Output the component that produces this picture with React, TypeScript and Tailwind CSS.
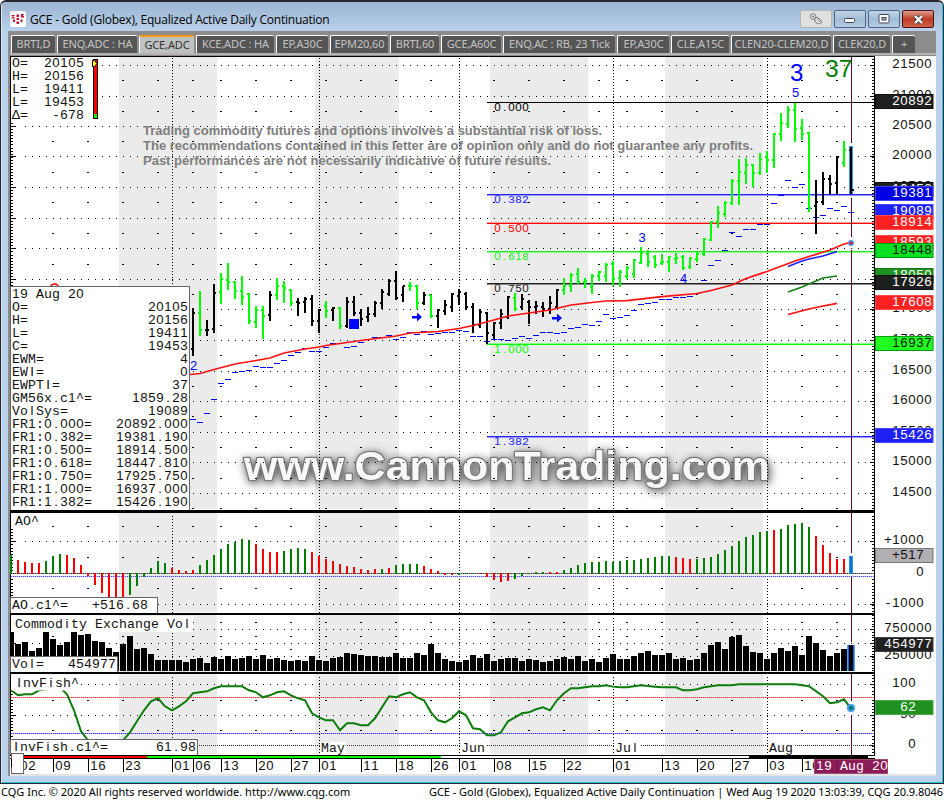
import React from "react";

const SANS = "font-['Liberation_Sans',sans-serif]";
const MONO = "font-['Liberation_Mono',monospace]";

type MonoProps = { x: number; y: number; t: string; fill?: string; pitch?: number; size?: number; end?: boolean };

// Fixed-pitch text: every glyph is centred in its own cell.
function Mono({ x, y, t, fill = "#111", pitch = 8, size = 13.2, end = false }: MonoProps) {
  const x0 = end ? x - t.length * pitch : x;
  return (
    <text y={y} fill={fill} fontSize={size} textAnchor="middle" xmlSpace="preserve">
      {t.split("").map((c, i) => (
        <tspan key={i} x={x0 + pitch * (i + 0.5)} className={/[01iIl.Δ]/.test(c) ? SANS : MONO}>
          {c}
        </tspan>
      ))}
    </text>
  );
}

// x, high, low, open, close, colour
type Bar = [number, number, number, number, number, string];
const bars: Bar[] = [
  [193,308,356,349,313,"k"],[200,291,336,313,330,"g"],[207,320,336,330,330,"k"],[214,284,333,329,293,"k"],
  [221,273,304,292,279,"g"],[228,263,290,280,282,"g"],[235,281,299,282,291,"g"],[242,276,305,291,297,"g"],
  [249,293,324,294,321,"g"],[256,306,328,322,310,"g"],[263,306,339,310,316,"g"],[270,291,321,315,295,"k"],
  [277,278,300,295,286,"g"],[284,281,303,286,288,"g"],[291,289,306,290,303,"g"],[298,298,316,302,303,"k"],
  [305,297,313,302,299,"k"],[312,295,326,299,321,"k"],[319,309,333,321,310,"k"],[326,301,318,306,311,"g"],
  [333,307,321,310,308,"k"],[340,307,329,308,326,"g"],[347,297,328,326,302,"k"],[354,296,316,302,313,"k"],
  [361,309,325,313,319,"k"],[368,307,322,317,314,"k"],[375,301,317,314,303,"k"],[382,289,309,303,292,"k"],
  [389,279,296,294,281,"k"],[396,271,300,281,298,"k"],[403,286,302,295,286,"k"],[410,282,291,286,286,"g"],
  [417,285,309,286,303,"g"],[424,292,305,303,295,"k"],[431,295,318,295,316,"g"],[438,309,328,316,310,"k"],
  [445,300,315,311,305,"k"],[452,293,312,307,294,"k"],[459,289,305,296,292,"k"],[466,292,310,294,307,"k"],
  [473,303,333,307,325,"k"],[480,309,328,325,312,"k"],[487,312,344,313,333,"k"],[494,322,339,335,323,"k"],
  [501,309,329,323,314,"k"],[508,296,319,317,297,"k"],[515,293,311,298,309,"g"],[522,294,310,307,299,"k"],
  [529,300,324,302,307,"k"],[536,301,314,307,306,"k"],[543,302,317,307,309,"k"],[550,296,314,309,303,"k"],
  [557,289,309,307,290,"k"],[564,278,295,290,286,"g"],[571,273,292,286,275,"g"],[578,268,284,274,282,"g"],
  [585,278,288,282,281,"g"],[592,274,294,287,276,"g"],[599,271,281,276,272,"g"],[606,263,282,276,265,"g"],
  [613,261,286,264,279,"g"],[620,270,287,278,272,"g"],[627,266,279,276,268,"g"],[634,259,278,274,260,"g"],
  [641,247,264,263,253,"g"],[648,250,267,254,262,"g"],[655,255,268,257,265,"g"],[662,254,265,263,262,"g"],
  [669,256,272,262,257,"g"],[676,253,264,259,258,"g"],[683,255,270,257,268,"g"],[690,257,269,267,258,"g"],
  [697,251,262,259,254,"g"],[704,238,256,254,239,"g"],[711,221,241,240,222,"g"],[718,206,228,222,213,"g"],
  [725,201,217,214,203,"g"],[732,179,205,203,181,"g"],[739,159,205,181,172,"g"],[746,158,184,173,165,"g"],
  [753,164,187,165,173,"g"],[760,153,175,173,159,"g"],[767,151,173,157,160,"g"],[774,133,168,160,134,"g"],
  [781,113,141,134,123,"g"],[788,106,128,124,110,"g"],[795,103,142,110,129,"g"],[802,119,140,128,134,"g"],
  [809,132,212,133,208,"g"],[816,180,234,206,202,"k"],[823,172,205,202,179,"k"],[830,175,194,179,184,"k"],
  [837,156,194,183,157,"k"],[844,141,167,163,150,"g"],
];

// Volatility stops, one per session starting at x = 193
const stops = [
  419,422,413,399,383,379,372,371,370,366,367,367,363,360,355,352,348,351,351,347,343,343,347,346,342,339,337,337,
  335,339,337,332,334,331,334,333,332,332,330,331,336,336,341,339,339,340,338,336,338,335,332,332,333,332,328,327,
  324,325,321,314,318,317,315,310,304,303,302,299,299,297,297,296,293,280,265,260,250,232,236,229,229,224,224,203,
  195,180,187,184,208,217,215,208,210,206,212,
];

// Awesome oscillator: third-pixel offset from the zero line, negative below it; starts at x = 11
const ao = [
  "g57","r41","r35","r32","r32","g38","g53","g59","r56","r47","r26","r-7","r-34","r-57","r-72","r-72","r-72","g-64",
  "g-37","g-10","g17","g38","g32","r17","r11","r8","r11","g26","g41","g56","g74","g89","g95","g104","g101","r89","r74",
  "r65","r65","g68","g74","g77","g74","r65","r53","r44","r38","r29","r23","r20","r14","r11","r14","g14","r17","g26",
  "g29","g29","g29","r23","r14","r8","r-4","r-4","g-4","g2","g2","r2","r-10","r-19","r-25","r-22","g-16","g-7","g2",
  "g5","g5","r5","r5","g11","g17","g26","g32","g35","g35","g38","g35","g38","g41","g41","g44","g47","g50","g53","g53",
  "r50","r47","r44","g44","g47","g50","g59","g71","g83","g98","g110","g116","g125","g128","r131","g134","g146","g149",
  "g152","g140","r113","r86","r62","r44","r44",
];

// Volume bar tops in thirds of a pixel below y = 600; starts at x = 11
const vol = [
  96,132,126,153,144,96,117,135,126,96,105,102,123,126,144,156,132,108,147,144,162,180,180,180,180,186,178,175,189,171,
  178,168,177,175,168,177,165,177,174,180,183,180,183,168,180,183,174,171,159,162,165,168,168,171,171,159,174,174,159,
  165,132,159,178,183,186,180,165,174,162,183,178,174,174,183,178,180,186,183,178,171,178,168,183,178,186,174,162,178,
  178,168,159,153,165,165,159,177,174,180,177,159,135,126,147,111,105,138,156,159,177,159,144,153,138,165,108,129,150,
  168,159,147,135,
];

const fish: [number, number][] = [
  [11,270],[18,285],[25,282],[32,282],[39,270],[60,262],[67,282],[74,330],[81,393],[88,420],[100,445],[112,448],[123,420],[130,396],
  [137,363],[144,330],[151,303],[158,294],[165,318],[172,330],[179,318],[186,303],[193,279],[200,276],[207,273],[214,264],
  [221,258],[242,258],[249,270],[256,276],[263,291],[270,285],[277,276],[284,273],[291,285],[298,294],[305,300],[312,339],
  [319,351],[326,360],[333,360],[340,390],[347,369],[354,369],[361,375],[368,375],[375,354],[382,321],[389,288],[396,291],
  [403,282],[410,276],[417,291],[424,300],[431,336],[438,360],[445,366],[452,354],[459,333],[466,345],[473,384],[480,387],
  [487,405],[494,405],[501,396],[508,363],[515,351],[522,339],[529,336],[536,327],[543,321],[550,330],[557,300],[564,279],
  [571,264],[578,264],[585,261],[592,258],[599,258],[606,255],[613,259],[620,261],[627,261],[641,255],[655,259],[662,261],
  [676,261],[683,270],[690,270],[697,267],[704,261],[718,255],[732,255],[739,252],[795,252],[809,258],[823,288],[830,309],
  [837,306],[844,297],[851,324],
];

const bands = [[119, 98], [315, 84], [490, 98], [665, 98]];
const months = [172, 319, 459, 613, 767];
const dashX = [53,88,123,158,193,221,256,291,326,361,396,431,494,529,564,599,627,662,697,732,802,837];

function Bands({ y, h }: { y: number; h: number }) {
  return <>{bands.map(([x, w]) => <rect key={x} x={x} y={y} width={w} height={h} fill="#ebebeb" />)}</>;
}

function Grid({ y, h, dots, dashes }: { y: number; h: number; dots: number[]; dashes: number[] }) {
  return (
    <g shapeRendering="crispEdges">
      {dots.map((d) => <line key={d} x1={25} x2={869} y1={d + 0.5} y2={d + 0.5} stroke="#000" strokeDasharray="1 6" />)}
      {dashes.map((d) => dashX.map((x) => <rect key={`${d}-${x}`} x={x - 1} y={d} width={2} height={1} />))}
      {months.map((x) => <line key={x} x1={x + 0.5} x2={x + 0.5} y1={y} y2={y + h} stroke="#000" strokeDasharray="1 2" />)}
    </g>
  );
}

function Ticks({ y, h, step, majors, top = 0 }: { y: number; h: number; step: number; majors: number[]; top?: number }) {
  const ys: number[] = [];
  for (let v = majors[0]; v > y; v -= step) ys.push(v);
  for (let v = majors[0] + step; v < y + h; v += step) ys.push(v);
  return (
    <g shapeRendering="crispEdges">
      {ys.map((v) => {
        const r = Math.round(v);
        return (
          <React.Fragment key={v}>
            {r > top && <rect x={11} y={r} width={2} height={1} />}
            <rect x={872} y={r} width={2} height={1} />
          </React.Fragment>
        );
      })}
      {majors.map((m) => (
        <React.Fragment key={m}>
          {m > top && <rect x={11} y={m} width={5} height={1} />}
          <rect x={870} y={m} width={4} height={1} />
        </React.Fragment>
      ))}
      <rect x={874} y={y} width={1} height={h} />
      <rect x={10} y={y} width={1} height={h} />
    </g>
  );
}

function Cross({ segs }: { segs: [number, number][] }) {
  return <>{segs.map(([a, b]) => <rect key={a} x={851} y={a} width={1} height={b - a} fill="#5c0a34" />)}</>;
}

function Pane({ y, h, axis, children }: { y: number; h: number; axis: React.ReactNode; children: React.ReactNode }) {
  return (
    <div className="flex">
      <svg width={865} height={h} viewBox={`10 ${y} 865 ${h}`} className="block shrink-0 bg-white">
        {children}
      </svg>
      <svg width={59} height={h} viewBox={`875 ${y} 59 ${h}`} className="block shrink-0 overflow-visible bg-white">
        {axis}
      </svg>
    </div>
  );
}

function Tag({ y, t, bg, fill = "#fff", stroke, end = 932 }: { y: number; t: string; bg: string; fill?: string; stroke: string; end?: number }) {
  return (
    <g>
      <rect x={875.5} y={y + 0.5} width={57.5} height={14} fill={bg} stroke={stroke} />
      <Mono x={end} y={y + 11} t={t} fill={fill} end />
    </g>
  );
}

const priceMajors = [65, 96, 126, 156, 187, 218, 248, 279, 309, 340, 371, 401, 432, 462, 493];
const priceDashes = [80, 111, 141, 172, 202, 233, 264, 294, 325, 355, 386, 416, 447, 478, 508];
const fibs: [number, string, string, number, string][] = [
  [102, "0.000", "#000", 111, "#000"],
  [194, "0.382", "#2222ff", 203, "#9a9aff"],
  [223, "0.500", "#f00", 232, "#ff9a9a"],
  [251, "0.618", "#22ee22", 260, "#98ff98"],
  [283, "0.750", "#222", 292, "#888"],
  [344, "1.000", "#00ff00", 353, "#88ff88"],
  [436, "1.382", "#2222ff", 445, "#9a9aff"],
];
const popup: [string, string][] = [
  ["19 Aug 20", ""], ["O=", "20105"], ["H=", "20156"], ["L=", "19411"], ["C=", "19453"], ["EWM=", "4"], ["EWI=", "0"],
  ["EWPTI=", "37"], ["GM56x.c1^=", "1859.28"], ["VolSys=", "19089"], ["FR1:0.000=", "20892.000"], ["FR1:0.382=", "19381.190"],
  ["FR1:0.500=", "18914.500"], ["FR1:0.618=", "18447.810"], ["FR1:0.750=", "17925.750"], ["FR1:1.000=", "16937.000"],
  ["FR1:1.382=", "15426.190"],
];
const summary: [string, string][] = [["O=", "20105"], ["H=", "20156"], ["L=", "19411"], ["L=", "19453"], ["Δ=", "-678"]];

function PricePane() {
  return (
    <Pane
      y={57}
      h={453}
      axis={
        <>
          {priceMajors.map((m, i) => <Mono key={m} x={932} y={m + 3} t={String(21500 - i * 500)} end />)}
          <Tag y={94} t="20892" bg="#202020" stroke="#111" />
          <Tag y={182} t="19453" bg="#202020" stroke="#111" />
          <Tag y={186} t="19381" bg="#0000e4" stroke="#4444ff" />
          <Tag y={204} t="19089" bg="#2020ff" stroke="#4646ff" />
          <Tag y={215} t="18914" bg="#ff2020" stroke="#ff4a4a" />
          <Tag y={235} t="18593" bg="#ff2020" stroke="#ff4a4a" />
          <Tag y={243} t="18448" bg="#06e020" fill="#111" stroke="#009a10" />
          <Tag y={268} t="18050" bg="#209020" stroke="#157515" />
          <Tag y={275} t="17926" bg="#1c1f1c" stroke="#111" />
          <Tag y={295} t="17608" bg="#ff2020" stroke="#ff4a4a" />
          <Tag y={336} t="16937" bg="#20ff20" fill="#111" stroke="#009a10" />
          <Tag y={428} t="15426" bg="#2020ff" stroke="#4646ff" />
        </>
      }
    >
      <defs>
        <filter id="glow" x="-10%" y="-60%" width="120%" height="220%">
          <feDropShadow dx="1" dy="2" stdDeviation="5" floodColor="#000" floodOpacity="0.7" />
        </filter>
      </defs>
      <Bands y={57} h={452} />
      <text
        x={244}
        y={479.5}
        textLength={526}
        lengthAdjust="spacingAndGlyphs"
        className={SANS}
        fontWeight="bold"
        fontSize={41}
        fill="#f8f8f8"
        stroke="#777"
        strokeWidth={2.6}
        strokeLinejoin="round"
        paintOrder="stroke"
        filter="url(#glow)"
      >
        www.CannonTrading.com
      </text>
      <Grid y={58} h={452} dots={priceMajors} dashes={priceDashes} />
      <Ticks y={57} h={453} step={3.057} majors={priceMajors} top={121} />
      <g className={SANS} fontWeight="bold" fontSize={13} fill="#7e7e7e">
        <text x={143} y={135} textLength={459}>Trading commodity futures and options involves a substantial risk of loss.</text>
        <text x={143} y={150} textLength={610}>The recommendations contained in this letter are of opinion only and do not guarantee any profits.</text>
        <text x={143} y={165} textLength={408}>Past performances are not necessarily indicative of future results.</text>
      </g>
      {fibs.map(([y, t, c, by, soft]) => (
        <g key={t}>
          {t !== "0.000" && <rect x={487} y={t === "0.500" || t === "1.000" ? y - 1 : y + 1} width={387} height={1} fill={soft} />}
          <rect x={487} y={y} width={387} height={1} fill={c} />
          <Mono x={494} y={by} t={t} fill={c} pitch={7} size={11.6} />
        </g>
      ))}
      <g shapeRendering="crispEdges" fill="#00f">
        {stops.map((y, i) => <rect key={i} x={190 + i * 7} y={y} width={6} height={1} />)}
      </g>
      <g shapeRendering="crispEdges">
        {bars.map(([x, hi, lo, o, c, k]) => (
          <g key={x} fill={k === "g" ? "#00ff00" : "#000"}>
            <rect x={x - 1} y={hi} width={2} height={lo - hi} />
            <rect x={x - 2} y={o - 1} width={2} height={2} />
            <rect x={x} y={c - 1} width={2} height={2} />
          </g>
        ))}
        <rect x={849} y={146} width={4} height={48} fill="#3399ff" />
        <rect x={850} y={147} width={2} height={47} />
        <rect x={849} y={149} width={2} height={2} />
        <rect x={851} y={189} width={3} height={2} />
        <rect x={349} y={319} width={10} height={10} fill="#00f" />
      </g>
      <g fill="#00f">
        <path d="M412 316h5v-3.5l5 4.5-5 4.5V318.5h-5z" />
        <path d="M552 317h5v-3.5l5 4.5-5 4.5V319.5h-5z" />
      </g>
      <g fill="none" strokeWidth={1.7}>
        <polyline stroke="#ff1010" points="190,374.5 200,373.5 214,369.5 235,364 256,360.5 270,358 284,353 305,349 319,347 326,345.5 361,340.5 396,336 410,333 438,331.5 459,328.5 473,325.5 494,320 508,316 529,313 550,310 571,305 592,302.5 606,301 627,300.7 662,296.7 697,293.5 711,290.5 732,285 746,278.5 767,271.5 795,261 809,256.5 830,250 844,244 851,242.5" />
        <polyline stroke="#2020ff" points="788,266.5 802,261 809,259 823,256 837,251.5" />
        <polyline stroke="#158015" points="788,292 802,287 816,281 823,278 830,277 837,276" />
        <polyline stroke="#ff1010" points="788,314.5 809,309 823,306 837,303.3" />
        <circle cx={54.5} cy={288} r={4} stroke="#f00" />
      </g>
      <circle cx={851} cy={243} r={3} fill="#4a90e0" />
      <circle cx={851} cy={243} r={1.5} fill="#e01838" />
      <Cross segs={[[57, 143], [198, 237], [250, 510]]} />
      <g className={SANS} fontSize={13} fill="#00f">
        <text x={790} y={81} fontSize={24}>3</text>
        <text x={825} y={77} fontSize={24.5} fill="#008000">37</text>
        <text x={792} y={97}>5</text>
        <text x={638.5} y={242}>3</text>
        <text x={680} y={283}>4</text>
        <text x={190} y={370}>2</text>
      </g>

      <rect x={11} y={57} width={89} height={64} fill="#fff" />
      {summary.map(([a, b], i) => (
        <React.Fragment key={i}>
          <Mono x={12} y={67 + i * 13} t={a} />
          <Mono x={84} y={67 + i * 13} t={b} end />
        </React.Fragment>
      ))}
      <rect x={93.5} y={59.5} width={4} height={59} fill="#f00" stroke="#000" />
      <rect x={94} y={114} width={3} height={4} fill="#0e0" />
      <path d="M92.5 60.5h2l2.5 3-2.5 3h-2z" fill="#ff0" stroke="#000" />

      <rect x={10.5} y={286.5} width={179} height={224} fill="#fff" stroke="#666" />
      {popup.map(([a, b], i) => (
        <React.Fragment key={i}>
          <Mono x={12} y={298 + i * 13} t={a} />
          {b && <Mono x={188} y={298 + i * 13} t={b} end />}
        </React.Fragment>
      ))}
    </Pane>
  );
}

function OscPane() {
  return (
    <Pane
      y={513}
      h={100}
      axis={
        <>
          <Mono x={924} y={544} t="+1000" end />
          <Mono x={924} y={576} t="0" end />
          <Mono x={924} y={607} t="-1000" end />
          <Tag y={548} t="+517" bg="#b2afb2" fill="#111" stroke="#777" end={924} />
        </>
      }
    >
      <Bands y={513} h={99} />
      <Grid y={516} h={97} dots={[541, 604]} dashes={[526, 557, 588]} />
      <Ticks y={513} h={100} step={3.17} majors={[573, 541, 604]} top={527} />
      <g shapeRendering="crispEdges">
        <line x1={11} x2={874} y1={573.5} y2={573.5} stroke="#999" />
        <line x1={11} x2={874} y1={573.5} y2={573.5} stroke="#333" strokeDasharray="1 1" />
        <line x1={11} x2={874} y1={576.5} y2={576.5} stroke="#4a4aff" strokeDasharray="1 1" />
        <line x1={11} x2={874} y1={576.5} y2={576.5} stroke="#c0c0ff" strokeDasharray="1 1" strokeDashoffset={1} />
        {ao.map((s, i) => {
          const v = Number(s.slice(1)) / 3;
          return <rect key={i} x={10 + i * 7} y={v > 0 ? 574 - v : 573} width={2} height={Math.abs(v) + (v > 0 ? 0 : 1)} fill={s[0] === "g" ? "#008000" : "#f00"} />;
        })}
        <rect x={849} y={556} width={4} height={18} fill="#2a90e8" />
        <rect x={850} y={557} width={2} height={17} fill="#0878c8" />
      </g>
      <Cross segs={[[513, 553], [577, 613]]} />
      <rect x={12} y={515} width={28} height={14} fill="#fff" />
      <Mono x={15} y={525} t="AO^" />
      <rect x={10.5} y={597.5} width={147} height={18} fill="#fff" stroke="#666" />
      <Mono x={12} y={609} t="AO.c1^=" />
      <Mono x={148} y={609} t="+516.68" end />
    </Pane>
  );
}

function VolumePane() {
  return (
    <Pane
      y={615}
      h={57}
      axis={
        <>
          <Mono x={932} y={632} t="750000" end />
          <Mono x={932} y={659} t="250000" end />
          <Tag y={637} t="454977" bg="#202020" stroke="#444" />
        </>
      }
    >
      <Bands y={615} h={57} />
      <Grid y={618} h={54} dots={[629, 643, 656]} dashes={[622, 636, 649]} />
      <Ticks y={615} h={57} step={2.75} majors={[629, 643, 656]} top={632} />
      <g shapeRendering="crispEdges">
        {vol.map((v, i) => {
          const y = Math.round(600 + v / 3);
          return <rect key={i} x={Math.max(11, 8 + i * 7)} y={y} width={i === 0 ? 3 : 6} height={671 - y} fill={i === 120 ? "#0a68d8" : "#000"} />;
        })}
        <rect x={847} y={645} width={1} height={26} fill="#4aa0ff" />
        <rect x={849} y={645} width={4} height={26} />
        <rect x={854} y={645} width={1} height={26} fill="#4aa0ff" />
      </g>
      <Cross segs={[[615, 642]]} />
      <rect x={12} y={616} width={181} height={16} fill="#fff" />
      <Mono x={15} y={628} t="Commodity Exchange Vol" />
      <rect x={10.5} y={656.5} width={107} height={20} fill="#fff" stroke="#666" />
      <Mono x={12} y={668} t="Vol=" />
      <Mono x={116} y={668} t="454977" end />
    </Pane>
  );
}

function FishPane() {
  return (
    <Pane
      y={674}
      h={81}
      axis={
        <>
          <Mono x={916} y={687} t="100" end />
          <Mono x={916} y={718} t="50" end />
          <Mono x={916} y={748} t="0" end />
          <Tag y={700} t="62" bg="#209020" stroke="#4aa84a" end={916} />
        </>
      }
    >
      <Bands y={674} h={80} />
      <Grid y={677} h={77} dots={[684, 715]} dashes={[700, 730]} />
      <Ticks y={674} h={81} step={3.06} majors={[715, 684, 745]} top={691} />
      <g shapeRendering="crispEdges">
        <line x1={11} x2={874} y1={697.5} y2={697.5} stroke="#ff3030" strokeDasharray="1 1" />
        <line x1={11} x2={874} y1={697.5} y2={697.5} stroke="#ffaaaa" strokeDasharray="1 1" strokeDashoffset={1} />
        <line x1={11} x2={874} y1={733.5} y2={733.5} stroke="#3030ff" strokeDasharray="1 1" />
        <line x1={11} x2={874} y1={733.5} y2={733.5} stroke="#b4b4ff" strokeDasharray="1 1" strokeDashoffset={1} />
        <line x1={11} x2={874} y1={745.5} y2={745.5} stroke="#333" strokeDasharray="1 1" />
      </g>
      <polyline fill="none" stroke="#0a7d0a" strokeWidth={2} points={fish.map(([x, z]) => `${x},${600.3 + z / 3}`).join(" ")} />
      <Cross segs={[[674, 701], [715, 755]]} />
      <circle cx={851} cy={708} r={4} fill="#3a9af0" />
      <circle cx={851} cy={708} r={2} fill="#087060" />
      <rect x={12} y={675} width={67} height={15.5} fill="#fff" />
      <Mono x={15} y={687} t="InvFish^" />
      <rect x={10.5} y={739.5} width={187} height={17} fill="#fff" stroke="#666" />
      <Mono x={12} y={751} t="InvFish.c1^=" />
      <Mono x={196} y={751} t="61.98" end />
      {(["May", "Jun", "Jul", "Aug"] as const).map((m, i) => (
        <React.Fragment key={m}>
          <rect x={months[i + 1] + 1} y={742} width={26} height={12} fill="#fff" />
          <Mono x={months[i + 1] + 2} y={752} t={m} />
        </React.Fragment>
      ))}
    </Pane>
  );
}

const dates: [number, string][] = [
  [18,"02"],[53,"09"],[88,"16"],[123,"23"],[172,"01"],[193,"06"],[221,"13"],[256,"20"],[291,"27"],[319,"01"],[361,"11"],[396,"18"],
  [431,"26"],[459,"01"],[494,"08"],[529,"15"],[564,"22"],[613,"01"],[662,"13"],[697,"20"],[732,"27"],[767,"03"],[802,"10"],
];

function TimeAxis() {
  return (
    <svg width={924} height={19} viewBox="10 755 924 19" className="block overflow-visible bg-white">
      <g shapeRendering="crispEdges">
        <rect x={10} y={755} width={865} height={1} />
        <rect x={24} y={756} width={123} height={2} fill="#f00" />
        <rect x={147} y={756} width={294} height={2} fill="#0f0" />
        <rect x={749} y={755} width={119} height={4} />
        <rect x={10} y={758} width={865} height={1} />
        {dates.map(([x]) => <rect key={x} x={x} y={759} width={1} height={13} />)}
      </g>
      {dates.map(([x, t]) => <Mono key={x} x={x + 2} y={770} t={t} />)}
      <rect x={814.5} y={759.5} width={73} height={14} fill="#8c1c58" stroke="#a04878" />
      <rect x={837} y={760} width={1} height={12} fill="#701048" />
      <Mono x={816} y={770} t="19 Aug 20" fill="#fff" />
      <rect x={11.5} y={753.5} width={12} height={20} fill="#fff" stroke="#666" />
      <rect x={11} y={759} width={1} height={8} />
    </svg>
  );
}

const tabs = [
  { t: "BRTI,D", c: "w-[44px]" },
  { t: "ENQ,ADC : HA", c: "w-[80px]" },
  { t: "GCE,ADC", c: "w-[55px]", on: true },
  { t: "KCE,ADC : HA", c: "w-[78px]" },
  { t: "EP,A30C", c: "w-[52px]" },
  { t: "EPM20,60", c: "w-[58px]" },
  { t: "BRTI,60", c: "w-[49px]" },
  { t: "GCE,A60C", c: "w-[60px]" },
  { t: "ENQ,AC : RB, 23 Tick", c: "w-[112px]" },
  { t: "EP,A30C", c: "w-[52px]" },
  { t: "CLE,A15C", c: "w-[58px]" },
  { t: "CLEN20-CLEM20,D", c: "w-[100px]" },
  { t: "CLEK20,D", c: "w-[57px]" },
  { t: "+", c: "w-[23px]" },
];

function TitleBar() {
  const btn = "flex h-[18px] items-center justify-center rounded-[2px] border";
  return (
    <header className="flex h-[29px] items-start bg-linear-to-b from-[#9ab4d2] to-[#b9d1ea] px-[8px] pt-[8px]">
      <svg width="16" height="16" viewBox="0 0 16 16" className="mt-px block">
        <rect width="16" height="16" rx="2" fill="#fff" />
        <g fill="#c4122f">
          <path d="M1.500 4h3v1h-1v1h1v1.500h-3V6.500h1V5h-1zM6.500 3.500h2.500v2.500H6.500zM11 3h3v1h-1v1h1v1.500h-3V5.500zM6.500 7h2.500v2H6.500zM3 8.500h2v2.500H3zM6.500 10.500h2.500v2.500H6.500zM10.500 8.500h2v2.500h-2z" />
        </g>
      </svg>
      <h1 className="ml-[4px] mt-px grow whitespace-nowrap font-['Open_Sans',sans-serif] text-[12px] leading-[17px] tracking-[-0.22px] text-black">
        GCE - Gold (Globex), Equalized Active Daily Continuation
      </h1>
      <div className="flex gap-[2px]">
        <div className={`${btn} w-[32px] border-[#b4b4b4] bg-[#e0e0e0]`}>
          <svg width="14" height="14" viewBox="0 0 14 14" fill="#f4f4f4" stroke="#777">
            <circle cx="4" cy="4.500" r="2.800" />
            <rect x="5.500" y="6.500" width="7" height="4.600" rx="2.300" transform="rotate(40 9 8.800)" />
            <path d="M2.800 4.500h2.500M4 3.200v2.500M7.500 7l3.500 3" />
          </svg>
        </div>
        <div className={`${btn} w-[32px] border-[#51677f] bg-linear-to-b from-[#c2d5e8] via-[#a2bcd6] to-[#b4cde4]`}>
          <svg width="12" height="6" viewBox="0 0 12 6" className="mt-[3px]"><rect x=".5" y=".5" width="10" height="4" rx="1" fill="#fff" stroke="#445" /></svg>
        </div>
        <div className={`${btn} w-[32px] border-[#51677f] bg-linear-to-b from-[#c2d5e8] via-[#a2bcd6] to-[#b4cde4]`}>
          <svg width="12" height="10" viewBox="0 0 12 10"><rect x="1" y=".5" width="10" height="8.500" rx="1" fill="#fff" stroke="#445" /><rect x="4" y="3.500" width="4" height="2.500" fill="#9bb7d2" stroke="#445" /></svg>
        </div>
        <div className={`${btn} w-[32px] border-[#4c1410] bg-linear-to-b from-[#dd9a8e] via-[#bf3a24] to-[#cf6048]`}>
          <svg width="13" height="11" viewBox="0 0 13 11"><path d="M3 2l7 7M10 2l-7 7" stroke="#444" strokeWidth="4.200" /><path d="M3 2l7 7M10 2l-7 7" stroke="#fff" strokeWidth="2.400" /></svg>
        </div>
      </div>
    </header>
  );
}

export default function App() {
  return (
    <div className="flex h-[800px] w-[944px] flex-col overflow-hidden bg-white">
      <div className="h-[784px] overflow-hidden rounded-t-[6px] border-x border-b border-t-2 border-[#28262c] bg-[#b9d1ea]">
        <div className="h-[781px] border-x border-b border-b-[#20c8e8] border-l-[#dce9f6] border-r-[#20c8e8]">
          <TitleBar />
          <div className="mx-[6px] border-l-2 border-[#8c8c8c] bg-white">
            <nav className="flex h-[22px] items-end gap-[2px] bg-[#8c8c8c] pl-px pt-[3px] font-['Noto_Sans',sans-serif] text-[11px]">
              {tabs.map((tab, i) => (
                <div
                  key={i}
                  className={`${tab.c} flex h-[18px] shrink-0 items-center justify-center whitespace-nowrap rounded-t-[2px] border-l border-t tracking-[-0.12px] ${
                    tab.on ? "border-l-white border-t-2 border-t-[#f79a1c] bg-[#bdc1bf] text-[#333]" : "border-white bg-[#555] text-[#c4c4c4]"
                  }`}
                >
                  {tab.t}
                </div>
              ))}
            </nav>
            <div className="h-[3px] border-b border-[#8c8c8c] bg-[#b4b4b4]" />
            <div className="h-px w-[865px] bg-black" />
            <div className="flex w-[924px] flex-col">
              <PricePane />
              <div className="h-[3px] w-[865px] bg-black" />
              <OscPane />
              <div className="h-[2px] w-[865px] bg-black" />
              <VolumePane />
              <div className="h-[2px] w-[865px] bg-black" />
              <FishPane />
              <TimeAxis />
            </div>
            <div className="h-[2px] bg-[#e4e4e4]" />
          </div>
        </div>
      </div>
      <footer className="flex h-[16px] items-center justify-between whitespace-nowrap px-px font-['Noto_Sans',sans-serif] text-[11px] leading-[16px] text-black">
        <span>CQG Inc. © 2020 All rights reserved worldwide. http://www.cqg.com</span>
        <span className="tracking-[-0.04px]">GCE - Gold (Globex), Equalized Active Daily Continuation | Wed Aug 19 2020 13:03:39, CQG 20.9.8046</span>
      </footer>
    </div>
  );
}
